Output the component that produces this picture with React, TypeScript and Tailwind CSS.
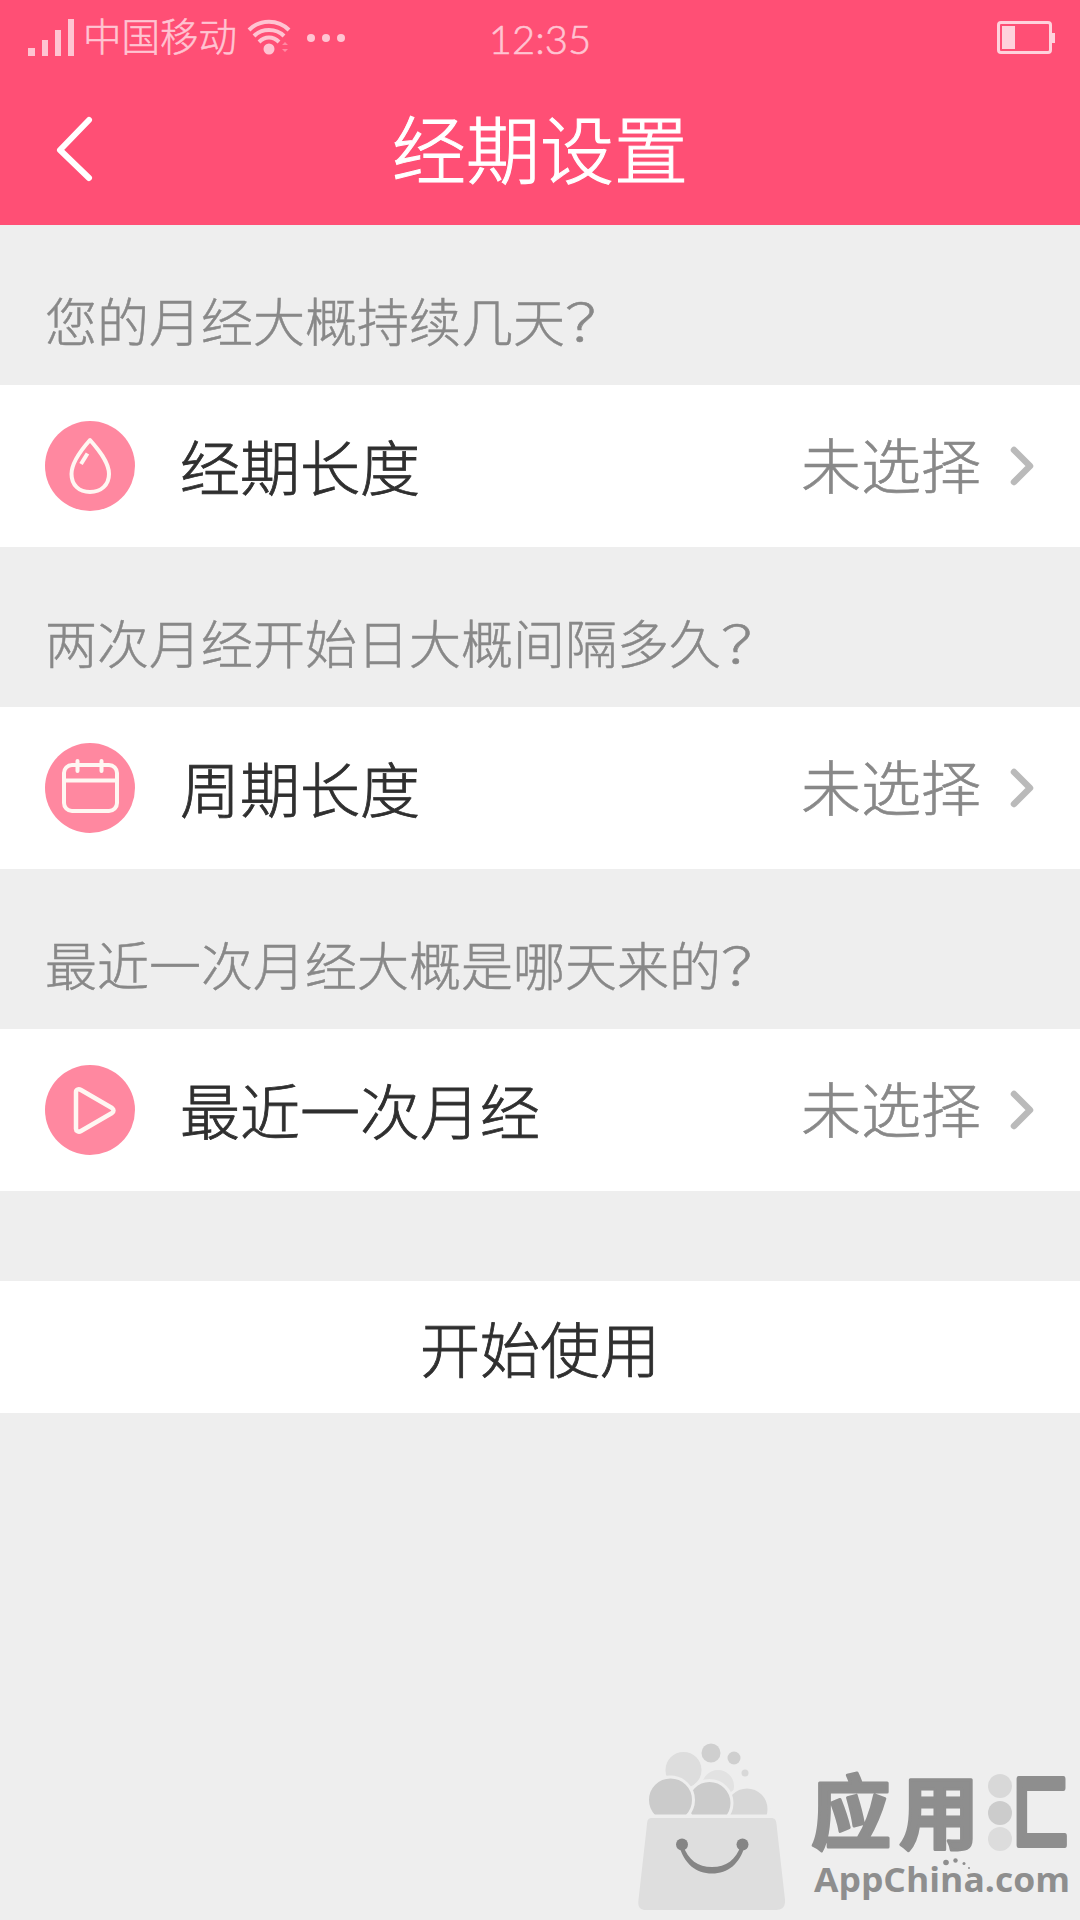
import React from "react";

interface SettingItem {
  question: string;
  label: string;
  value: string;
  icon: React.ReactNode;
}

const DropIcon = () => (
  <svg viewBox="0 0 90 90" className="h-[90px] w-[90px]" fill="none" stroke="#fff7f2" strokeWidth="4" strokeLinecap="round" strokeLinejoin="round">
    <path d="M45 19C37 28 26.500 41 26.500 53C26.500 64 34 71 45 71C56 71 64 64 64 53C64 41 53 28 45 19Z" />
    <path d="M42.500 32.500L36 43" strokeLinecap="butt" />
  </svg>
);

const CalendarIcon = () => (
  <svg viewBox="0 0 90 90" className="h-[90px] w-[90px]" fill="none" stroke="#fff7f2" strokeWidth="4" strokeLinecap="round">
    <rect x="19" y="22" width="53" height="46" rx="8" />
    <path d="M19 37.500H72M32.500 18V28M56.500 18V28" />
  </svg>
);

const PlayIcon = () => (
  <svg viewBox="0 0 90 90" className="h-[90px] w-[90px]" fill="none" stroke="#fff7f2" strokeWidth="4.500" strokeLinejoin="round">
    <path d="M31 27C31 24.500 33.500 23.500 36 25L67 43C69 44.500 69 46.500 67 48L36 66C33.500 67.500 31 66 31 64Z" />
  </svg>
);

const items: SettingItem[] = [
  { question: "您的月经大概持续几天", label: "经期长度", value: "未选择", icon: <DropIcon /> },
  { question: "两次月经开始日大概间隔多久", label: "周期长度", value: "未选择", icon: <CalendarIcon /> },
  { question: "最近一次月经大概是哪天来的", label: "最近一次月经", value: "未选择", icon: <PlayIcon /> },
];

const StatusBar = () => (
  <div className="flex h-[75px] items-center text-[#ffc4d2]">
    <div className="flex flex-1 items-center">
      <svg viewBox="0 0 46 38" className="ml-[28px] h-[38px] w-[46px]" fill="currentColor">
        <path d="M0 29h7v8H0zM14 21h6v16h-6zM27 11h6v26h-6zM40 0h6v37h-6z" />
      </svg>
      <span className="ml-[9px] pb-[6px] text-[38.500px] leading-none [-webkit-text-stroke:0.500px_#ffc4d2]">中国移动</span>
      <svg viewBox="0 0 44 38" className="ml-[10px] h-[38px] w-[44px]" fill="none" stroke="currentColor" strokeWidth="4">
        <path d="M2 11C13 0 31 0 42 11M7 17C15 9 29 9 37 17M12 23C18 17 26 17 32 23" />
        <circle cx="22" cy="30" r="5.500" fill="currentColor" stroke="none" />
        <path d="M35 26L38 23L41 26ZM35 30L38 33L41 30Z" fill="currentColor" stroke="none" opacity="0.500" />
      </svg>
      <div className="ml-[16px] flex gap-[7px]">
        <span className="h-2 w-2 rounded-full bg-[#ffc4d2]" />
        <span className="h-2 w-2 rounded-full bg-[#ffc4d2]" />
        <span className="h-2 w-2 rounded-full bg-[#ffc4d2]" />
      </div>
    </div>
    <span className="pt-[2px] font-['Lato','Noto_Sans_CJK_SC',sans-serif] text-[40px] leading-none [-webkit-text-stroke:0.600px_#ffc4d2]">12:35</span>
    <div className="flex flex-1 items-center justify-end">
      <div className="h-[33px] w-[55px] rounded-[4px] border-[3px] border-[#ffd2dc] p-[2px]">
        <div className="h-full w-[13px] bg-[#ffd2dc]" />
      </div>
      <div className="mr-[25px] h-[10px] w-[3px] bg-[#ffd2dc]" />
    </div>
  </div>
);

const Header = () => (
  <header className="h-[225px] bg-[#ff4f75]">
    <StatusBar />
    <div className="grid h-[150px] grid-cols-3 items-center">
      <svg viewBox="0 0 40 70" className="ml-[54px] h-[70px] w-[40px]" fill="none" stroke="white" strokeWidth="6" strokeLinecap="round" strokeLinejoin="round">
        <path d="M35 5L6 35L35 63" />
      </svg>
      <h1 className="pb-[8px] text-center text-[74px] leading-none whitespace-nowrap text-white [-webkit-text-stroke:1px_#ffffff]">经期设置</h1>
    </div>
  </header>
);

const SettingRow = ({ question, label, value, icon }: SettingItem) => (
  <section>
    <p className="flex h-[160px] items-center pt-[29px] pl-[45px] text-[52px] leading-none text-[#888888] [-webkit-text-stroke:0.500px_#888888]">
      {question}
      <span className="origin-left scale-x-120">？</span>
    </p>
    <div className="flex h-[162px] items-center bg-white px-[45px]">
      <div className="h-[90px] w-[90px] rounded-full bg-[#ff88a0]">{icon}</div>
      <span className="ml-[45px] pb-[3px] text-[60px] leading-none text-[#2f2f2f] [-webkit-text-stroke:0.800px_#2f2f2f]">{label}</span>
      <span className="ml-auto pb-[6px] text-[60px] leading-none text-[#888888] [-webkit-text-stroke:0.600px_#888888]">{value}</span>
      <svg viewBox="0 0 26 40" className="ml-[28px] h-[40px] w-[26px]" fill="none" stroke="#bababa" strokeWidth="6.500" strokeLinecap="round" strokeLinejoin="round">
        <path d="M5 4L21 20L5 36" />
      </svg>
    </div>
  </section>
);

// Shopping bag full of bubbles with a smile on the front
const BagLogo = () => (
  <svg viewBox="0 0 150 170" className="h-[170px] w-[150px]">
    <circle cx="45.500" cy="30" r="18" fill="#dddddd" />
    <circle cx="80" cy="46" r="16" fill="#e2e2e2" />
    <circle cx="73" cy="13" r="9.500" fill="#cfcfcf" />
    <circle cx="96" cy="18" r="6.500" fill="#cfcfcf" />
    <circle cx="107" cy="33" r="3.500" fill="#d8d8d8" />
    <circle cx="109" cy="69" r="22" fill="#d7d7d7" stroke="#eeeeee" strokeWidth="3" />
    <circle cx="71.500" cy="63" r="22.500" fill="#cbcbcb" stroke="#eeeeee" strokeWidth="3" />
    <circle cx="32.500" cy="60" r="23" fill="#cbcbcb" stroke="#eeeeee" strokeWidth="3" />
    <path d="M0 74.500H150V170H0Z" fill="#eeeeee" />
    <path d="M14 78H133C137 78 138 80 138.500 84L147 160C147.500 167 144 170 138 170H8C2 170 -0.500 167 0.500 160L9 84C9.500 80 10 78 14 78Z" fill="#dedede" />
    <circle cx="44" cy="104.500" r="6" fill="#858585" />
    <circle cx="104.500" cy="104.500" r="6" fill="#858585" />
    <path d="M41 105C46 124 58 133.500 74 133.500C90 133.500 102 124 107 105L103 105C98 120 88 127 74 127C60 127 50 120 45 105Z" fill="#858585" />
  </svg>
);

const Wordmark = () => (
  <svg viewBox="0 0 280 180" className="ml-[12px] h-[180px] w-[280px]" fill="#8e8e8e" strokeLinejoin="round">
    <g className="font-['Noto_Sans_CJK_SC',sans-serif] font-bold" fontSize="80" stroke="#8e8e8e" strokeWidth="3">
      <text x="11" y="102">应</text>
      <text x="99" y="102">用</text>
      <text transform="translate(213 101.500) scale(0.700 1)" x="0" y="0" strokeWidth="6">匚</text>
    </g>
    <circle cx="200" cy="46" r="12" fill="#d8d8d8" />
    <circle cx="200" cy="73" r="12" fill="#cccccc" />
    <circle cx="200" cy="99" r="12" fill="#dcdcdc" />
    <circle cx="146" cy="122.500" r="2.800" />
    <circle cx="155.500" cy="120.500" r="2.200" />
    <circle cx="164" cy="123.500" r="1.500" />
    <circle cx="169" cy="128" r="1" />
    <text x="14" y="152" fontSize="34" textLength="256" lengthAdjust="spacingAndGlyphs" className="font-['Open_Sans','Noto_Sans_CJK_SC',sans-serif] font-bold">
      AppChina.com
    </text>
  </svg>
);

const App: React.FC = () => {
  return (
    <div className="flex h-[1920px] w-[1080px] flex-col overflow-hidden bg-[#eeeeee] font-['Noto_Sans_CJK_SC',sans-serif] font-light">
      <Header />
      <main>
        {items.map((item) => (
          <SettingRow key={item.label} {...item} />
        ))}
        <button className="mt-[90px] flex h-[132px] w-full items-center justify-center bg-white text-[60px] leading-none text-[#2f2f2f] [-webkit-text-stroke:0.800px_#2f2f2f]">
          开始使用
        </button>
      </main>
      <footer className="mt-auto flex h-[180px] items-start pl-[638px]">
        <BagLogo />
        <Wordmark />
      </footer>
    </div>
  );
};

export default App;
